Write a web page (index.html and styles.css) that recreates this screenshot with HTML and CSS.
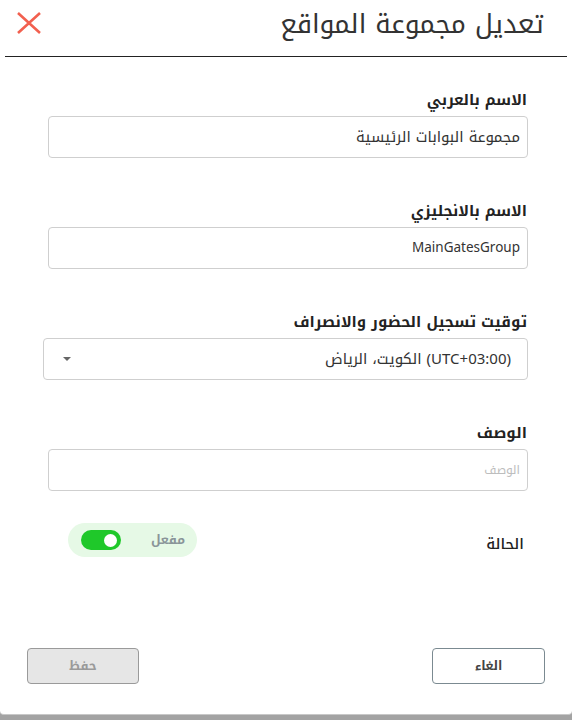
FILE: index.html
```html
<!DOCTYPE html>
<html lang="ar" dir="rtl">
<head>
<meta charset="utf-8">
<title>تعديل مجموعة المواقع</title>
<link rel="stylesheet" href="styles.css">
</head>
<body>
<div class="modal">
  <header class="modal-header">
    <h1 class="modal-title">تعديل مجموعة المواقع</h1>
    <button class="close-btn" aria-label="إغلاق">
      <svg width="26" height="22" viewBox="0 0 26 22"><path d="M2 1 L24 21 M24 1 L2 21" stroke="#f2604f" stroke-width="2.6" fill="none"/></svg>
    </button>
  </header>
  <div class="divider"></div>
  <form class="form">
    <div class="field">
      <label class="label">الاسم بالعربي</label>
      <div class="input">مجموعة البوابات الرئيسية</div>
    </div>
    <div class="field">
      <label class="label">الاسم بالانجليزي</label>
      <div class="input latin">MainGatesGroup</div>
    </div>
    <div class="field">
      <label class="label">توقيت تسجيل الحضور والانصراف</label>
      <div class="select">
        <span class="select-text">(UTC+03:00) الكويت، الرياض</span>
        <span class="caret"></span>
      </div>
    </div>
    <div class="field">
      <label class="label">الوصف</label>
      <div class="input placeholder">الوصف</div>
    </div>
    <div class="status-row">
      <span class="status-label">الحالة</span>
      <div class="pill">
        <span class="pill-text">مفعل</span>
        <span class="switch"><span class="knob"></span></span>
      </div>
    </div>
  </form>
  <footer class="footer">
    <button class="btn btn-cancel">الغاء</button>
    <button class="btn btn-save">حفظ</button>
  </footer>
</div>
</body>
</html>
```
FILE: styles.css
```css
html, body {
  margin: 0;
  padding: 0;
  background: #a3a3a3;
}
body {
  font-family: "Noto Kufi Arabic", "Noto Sans Arabic", "DejaVu Sans", sans-serif;
  color: #222;
}
.modal {
  width: 572px;
  height: 715px;
  background: #fff;
  border-radius: 0 0 4px 4px;
  display: flex;
  flex-direction: column;
  box-sizing: border-box;
  border-bottom: 1px solid #c8c8c8;
}
.modal-header {
  display: flex;
  justify-content: space-between;
  align-items: flex-start;
  height: 56px;
  padding: 4px 28px 0 16px;
  box-sizing: border-box;
}
.modal-title {
  margin: 0;
  font-size: 26.5px;
  font-weight: 400;
  color: #333;
  line-height: 41px;
}
.close-btn {
  background: none;
  border: 0;
  padding: 0;
  margin-top: 8px;
  width: 26px;
  height: 22px;
  display: flex;
}
.divider {
  height: 1px;
  background: #222;
  margin: 0 5px;
}
.form {
  padding: 31px 44px 0 44px;
  display: flex;
  flex-direction: column;
  gap: 41px;
}
.field {
  display: flex;
  flex-direction: column;
  gap: 4px;
}
.label {
  font-size: 15px;
  font-weight: 700;
  line-height: 24px;
  color: #222;
  padding-right: 1px;
}
.input {
  height: 42px;
  box-sizing: border-box;
  border: 1px solid #cfcfcf;
  border-radius: 4px;
  margin-left: 4px;
  padding: 0 7px;
  font-size: 15px;
  line-height: 40px;
  color: #333;
}
.input.latin {
  font-size: 13.5px;
}
.placeholder {
  color: #bdbdbd;
  font-size: 12px;
}
.select {
  height: 42px;
  box-sizing: border-box;
  border: 1px solid #cfcfcf;
  border-radius: 4px;
  margin-left: -1px;
  padding: 0 16px 0 19px;
  display: flex;
  justify-content: space-between;
  align-items: center;
  font-size: 15px;
  color: #333;
}
.caret {
  width: 0;
  height: 0;
  border-left: 4px solid transparent;
  border-right: 4px solid transparent;
  border-top: 4px solid #666;
}
.status-row {
  display: flex;
  justify-content: space-between;
  align-items: center;
  margin-top: -10px;
  padding-right: 4px;
  padding-left: 24px;
}
.status-label {
  font-size: 15px;
  font-weight: 500;
  color: #222;
  padding-top: 8px;
}
.pill {
  display: flex;
  align-items: center;
  gap: 30px;
  height: 34px;
  width: 129px;
  box-sizing: border-box;
  padding: 0 12px 0 13px;
  border-radius: 17px;
  background: #e6f9e6;
}
.pill-text {
  font-size: 12.5px;
  font-weight: 700;
  color: #8a9599;
}
.switch {
  width: 41px;
  height: 20px;
  border-radius: 10px;
  background: #1fc82a;
  display: flex;
  align-items: center;
  justify-content: flex-start;
  padding: 0 4px;
  box-sizing: border-box;
}
.knob {
  width: 13px;
  height: 13px;
  border-radius: 50%;
  background: #fff;
}
.footer {
  margin-top: auto;
  display: flex;
  justify-content: space-between;
  padding: 0 27px 30px 27px;
}
.btn {
  height: 36px;
  border-radius: 4px;
  font-family: inherit;
  font-size: 12.5px;
  font-weight: 700;
}
.btn-cancel {
  width: 113px;
  background: #fff;
  border: 1px solid #7b8a91;
  color: #444;
}
.btn-save {
  width: 112px;
  background: #e6e6e6;
  border: 1px solid #9a9a9a;
  color: #9a9a9a;
}
```
